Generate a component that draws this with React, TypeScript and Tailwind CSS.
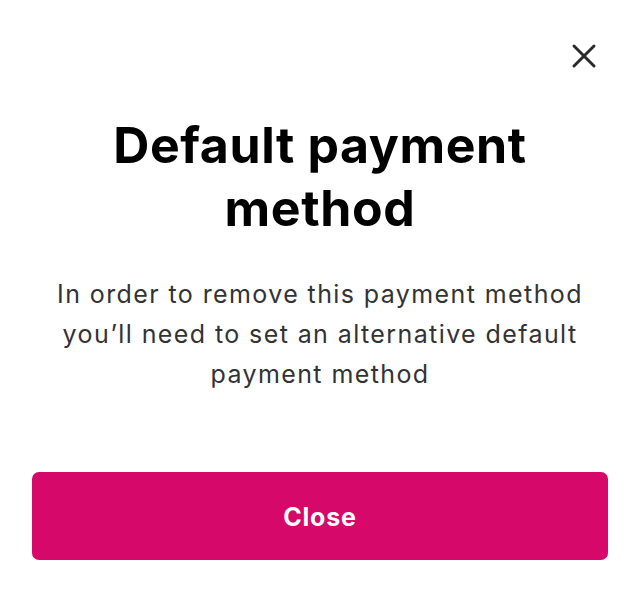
import React from "react";

const CloseIcon: React.FC = () => (
  <svg width="28" height="28" viewBox="0 0 28 28" fill="none">
    <path
      d="M4 4L24 24M24 4L4 24"
      stroke="#2b2b2b"
      strokeWidth="3"
      strokeLinecap="round"
    />
  </svg>
);

const App: React.FC = () => {
  return (
    <div className="bg-white w-[640px] h-[616px] flex flex-col px-[32px] pt-[42px] font-['Inter',sans-serif]">
      <div className="flex justify-end pr-[10px]">
        <button className="w-[28px] h-[28px] flex items-center justify-center">
          <CloseIcon />
        </button>
      </div>
      <h1 className="mt-[44px] text-center text-[50px] leading-[63px] font-bold text-black px-[40px] tracking-[0.6px]">
        Default payment method
      </h1>
      <p className="mt-[34px] text-center text-[25px] leading-[40px] text-[#333333] px-[10px] tracking-[1.4px]">
        In order to remove this payment method you’ll need to set an
        alternative default payment method
      </p>
      <button className="mt-[78px] h-[88px] w-full pt-[4px] rounded-[7px] bg-[#d6096b] text-white text-[25px] font-bold tracking-[0.8px]">
        Close
      </button>
    </div>
  );
};

export default App;
